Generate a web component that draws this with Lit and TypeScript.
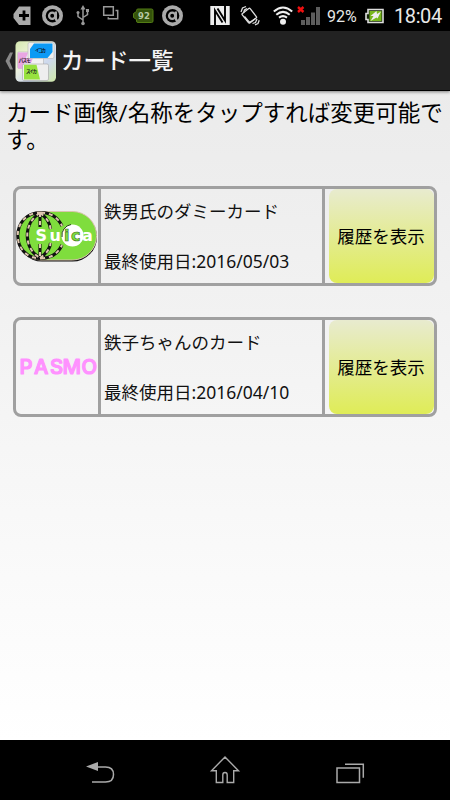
import { LitElement, html, css, svg } from "lit";
import { customElement, property } from "lit/decorators.js";

@customElement("status-bar")
class StatusBar extends LitElement {
  static styles = css`
    :host { display: flex; height: 31px; background: #000; color: #e8e8e8; font-family: Roboto, sans-serif; }
    svg { display: block; flex: none; }
    .percent { width: 38px; font-size: 16px; line-height: 33px; white-space: nowrap; }
    .clock { font-size: 20px; line-height: 32px; white-space: nowrap; margin-left: 9px; letter-spacing: -0.4px; }
    .level { font: bold 8.5px "DejaVu Sans", sans-serif; }
  `;
  render() {
    const ring = (x: number) => svg`
      <g transform="translate(${x} 15.7)">
        <circle r="10.5" fill="#aaa"></circle>
        <circle r="6.8" fill="#000"></circle>
        <circle r="3.1" cx="-.3" fill="none" stroke="#aaa" stroke-width="2.300"></circle>
        <path d="M3.400-4.200V3q0 2 3.500 3" fill="none" stroke="#aaa" stroke-width="2.300"></path>
      </g>`;
    return html`
      <svg width="327" height="31" viewBox="0 0 327 31">
        <path d="M19 6.5h11.5v18.500H19l-5.500-7v-4z" fill="#aaa"></path>
        <path d="M24 10.500v10M19 15.500h10" stroke="#000" stroke-width="2.800"></path>
        ${ring(52.5)}
        <g fill="none" stroke="#999" stroke-width="1.500">
          <path d="M83 8v15M83 20l-5-3.500V13M83 17.500l4.500-3V11"></path>
          <path d="M80.500 9.500L83 5l2.500 4.500z" fill="#999" stroke="none"></path>
          <circle cx="83" cy="23.500" r="1.800" fill="#999" stroke="none"></circle>
          <circle cx="78" cy="12.500" r="1.500" fill="#999" stroke="none"></circle>
          <path d="M86 9h3v3h-3z" fill="#999" stroke="none"></path>
          <path d="M103.700 6.700h9.600v8.600h-9.600z"></path>
          <path d="M115.500 10.500h2.200v8.200h-9.400v-1.500"></path>
        </g>
        <path d="M138 9h13.500q1.500 0 1.500 1.500v10.500q0 1.500-1.500 1.500H138q-1.500 0-1.500-1.500v-1.500l-3-2v-4l3-2V10.500q0-1.500 1.500-1.500z" fill="#35530b" stroke="#537c14"></path>
        <text class="level" x="138" y="18.800" fill="#b8c8a4" textLength="12">92</text>
        ${ring(172.5)}
        <path d="M210.300 6h19.400v19h-19.400z" fill="#eee"></path>
        <path d="M215 25V10.500l7.500 12M225 6v14.500l-7.500-12" fill="none" stroke="#000" stroke-width="1.900"></path>
        <g fill="none" stroke="#ddd" stroke-width="1.300">
          <rect x="-5" y="-6" width="10" height="12" rx="1" transform="translate(249.300 15.700) rotate(-38)"></rect>
          <path d="M244.500 16.500l5 6 6-4M241 12l1.500-4 3.500-1.500M243.500 13l1-3 2.500-1.500M252.500 23.500l3-1 1.500-3.500M255 24.800l3-1.300 1.200-3.200"></path>
        </g>
        <g fill="none" stroke="#eee" stroke-width="2">
          <path d="M273.800 11.500q9.200-8 18.400 0M276.300 14.700q6.700-5.700 13.400 0M279 17.600q4-3 8 0"></path>
          <circle cx="283" cy="21.700" r="3" fill="#eee" stroke="none"></circle>
        </g>
        <path d="M301 20h4v5h-4zM306 17h4v8h-4zM311 12.500h4V25h-4zM316 7h4v18h-4z" fill="#5d5d5d"></path>
        <path d="M298 7l5.500 5M303.500 7l-5.500 5" stroke="#f01010" stroke-width="2.400"></path>
      </svg>
      <div class="percent">92%</div>
      <svg width="20" height="31" viewBox="0 0 20 31">
        <path d="M3 9.500h15v13H3v-3H1v-6h2z" fill="#18280a" stroke="#ddd" stroke-width="1.600"></path>
        <path d="M4.500 11h12v10h-12z" fill="#77b71c"></path>
        <path d="M11.500 11L5.500 16h3l-3 5 6-3.500 1 1 3.500-7-4 2.500z" fill="#eee"></path>
      </svg>
      <div class="clock">18:04</div>`;
  }
}

@customElement("title-bar")
class TitleBar extends LitElement {
  static styles = css`
    :host { display: flex; height: 59px; background: #222; border-bottom: 1px solid #000; box-sizing: content-box; align-items: center; position: relative; box-shadow: 0 1px 3px #0007; }
    svg { display: block; flex: none; }
    h1 { margin: 0 0 2px 4px; font: 500 22.500px/57px "Noto Sans CJK JP", sans-serif; color: #f4f4f4; }
    .tiny { font: bold 4.500px "Noto Sans CJK JP", sans-serif; }
  `;
  render() {
    return html`
      <svg width="57" height="59" viewBox="0 31 57 59">
        <defs>
          <linearGradient id="tile" x2="1" y2="1"><stop stop-color="#d5e8b0"></stop><stop offset=".35" stop-color="#f0f4dc"></stop><stop offset=".65" stop-color="#cdd8ee"></stop><stop offset="1" stop-color="#cfe8a6"></stop></linearGradient>
        </defs>
        <path d="M13 52.500h-3L5.500 61l4.500 8.500h3L9.500 61z" fill="#888"></path>
        <rect x="15.500" y="41.300" width="40.500" height="40.500" rx="4.500" fill="url(#tile)"></rect>
        <rect x="17.500" y="52" width="26" height="16.500" rx="1.500" fill="#f1f1f3" stroke="#aaa" stroke-width=".5"></rect>
        <path d="M18 52.500h10l-2 5.500h7l-2 5h-7v5.500h-6z" fill="#eaa6e3"></path>
        <text class="tiny" x="18.700" y="62.300" fill="#222" textLength="12">パスモ</text>
        <rect x="28" y="42.500" width="26" height="16" rx="1.500" fill="#eee" stroke="#aaa" stroke-width=".5"></rect>
        <path d="M34 43.500h18.500V52l-5 6H30v-9z" fill="#0c9af5"></path>
        <text class="tiny" x="35" y="52" fill="#112" textLength="11">イコカ</text>
        <rect x="22.500" y="64" width="26" height="16.500" rx="1.500" fill="#eee" stroke="#999" stroke-width=".5"></rect>
        <path d="M24 64.800h12.500l3.500 14.700H24z" fill="#97e23e"></path>
        <text class="tiny" x="26" y="73" fill="#122" textLength="11">スイカ</text>
      </svg>
      <h1>カード一覧</h1>`;
  }
}

@customElement("transit-card")
class TransitCard extends LitElement {
  @property() brand = "";
  @property() name = "";
  @property() date = "";
  static styles = css`
    :host { display: flex; box-sizing: border-box; height: 100px; border: 3px solid #a0a0a0; border-radius: 8px; font-family: "Noto Sans", "Noto Sans CJK JP", sans-serif; color: #111; font-size: 17.500px; font-weight: 400; }
    svg { display: block; }
    .logo { width: 82px; border-right: 3px solid #a0a0a0; flex: none; }
    .info { width: 224px; box-sizing: border-box; padding-left: 3px; border-right: 3px solid #a0a0a0; display: flex; flex-direction: column; gap: 24px; padding-top: 9px; line-height: 26px; white-space: nowrap; flex: none; }
    .history { flex: 1; margin: 0 0 0 4px; padding: 0 1px 2px 0; border: 0; border-radius: 8px; background: linear-gradient(#e8ebcf, #dfec57); font: inherit; color: #000; white-space: nowrap; }
    .suica { font: bold 16px "DejaVu Sans", sans-serif; }
    .pasmo { font: 500 20.300px Inter, sans-serif; }
  `;
  render() {
    const arcs = "M25 23.500C-6 23.500-6 69.500 25 69.500M24 24C7 34 7 59 24 69M24 24C31 29 34 34 34.500 40M24 69C31 64 34 60 34.500 54M25 23.500Q40 24 46 37M25 69.500Q40 69 46 56M24 24v14M24 55v14";
    const suica = svg`
      <rect x="1.500" y="23.500" width="79.500" height="49" rx="24.500" fill="#111"></rect>
      <rect x="1" y="22.500" width="79.500" height="48.500" rx="24" fill="#7fdd3d" stroke="#d9c5ad"></rect>
      <path d="${arcs}" fill="none" stroke="#111" stroke-width="3.100"></path>
      <path d="${arcs}" fill="none" stroke="#dfc6b0" stroke-width="2" stroke-dasharray="4 4"></path>
      <circle cx="56.500" cy="46.500" r="11" fill="#fff"></circle>
      <path d="M46 48A11 11 0 0 1 55 35.500" fill="none" stroke="#234014" stroke-width="1"></path>
      <text class="suica" y="51.500" fill="#fff"><tspan x="19.500">S</tspan><tspan x="33.500">u</tspan><tspan x="48" fill="#7fdd3d" stroke="#387020" stroke-width=".6">i</tspan><tspan x="55" fill="#7fdd3d" stroke="#387020" stroke-width=".6">c</tspan><tspan x="66">a</tspan></text>`;
    const pasmo = svg`<text class="pasmo" y="54.400" x="3.500 18 34 46.500 65.500" fill="#ff91ff" stroke="#ff91ff" stroke-width="1.200" stroke-linejoin="round">PASMO</text>`;
    return html`
      <div class="logo"><svg width="82" height="94" viewBox="0 0 82 94">${this.brand === "suica" ? suica : pasmo}</svg></div>
      <div class="info"><div>${this.name}</div><div>最終使用日:${this.date}</div></div>
      <button class="history">履歴を表示</button>`;
  }
}

@customElement("nav-bar")
class NavBar extends LitElement {
  static styles = css`
    :host { display: flex; height: 60px; background: #000; align-items: center; justify-content: center; gap: 93px; }
    svg { display: block; }
  `;
  render() {
    return html`
      <svg width="32" height="60" viewBox="84 740 32 60"><path d="M86 766.500l12-4.500v9z" fill="#aaa"></path><path d="M97 767h8.500q8 0 8 7.500t-8 7.500H92" fill="none" stroke="#aaa" stroke-width="1.500"></path></svg>
      <svg width="32" height="60" viewBox="209 740 32 60"><path d="M225 757l13.500 13.700h-4.800v11.800h-6.500v-7.500q0-2.500-2.200-2.500t-2.200 2.500v7.500h-6.500v-11.800h-4.800z" fill="none" stroke="#aaa" stroke-width="1.400"></path></svg>
      <svg width="32" height="60" viewBox="334 740 32 60"><path d="M337 768h22.500v14.500H337zM345 764.200h18.300v13.500" fill="none" stroke="#aaa" stroke-width="1.500"></path></svg>`;
  }
}

@customElement("app-root")
class AppRoot extends LitElement {
  static styles = css`
    :host { display: flex; flex-direction: column; width: 450px; height: 800px; overflow: hidden; }
    main { flex: 1; background: linear-gradient(#ebebeb, #fff); }
    p { margin: 0; padding: 9px 0 0 6px; height: 86px; font: 400 22.500px/27px Roboto, "Noto Sans CJK JP", sans-serif; color: #000; }
    .cards { display: flex; flex-direction: column; gap: 31px; padding: 0 13px; }
  `;
  render() {
    return html`
      <status-bar></status-bar>
      <title-bar></title-bar>
      <main>
        <p>カード画像/名称をタップすれば変更可能で<br>す。</p>
        <div class="cards">
          <transit-card brand="suica" name="鉄男氏のダミーカード" date="2016/05/03"></transit-card>
          <transit-card brand="pasmo" name="鉄子ちゃんのカード" date="2016/04/10"></transit-card>
        </div>
      </main>
      <nav-bar></nav-bar>`;
  }
}
